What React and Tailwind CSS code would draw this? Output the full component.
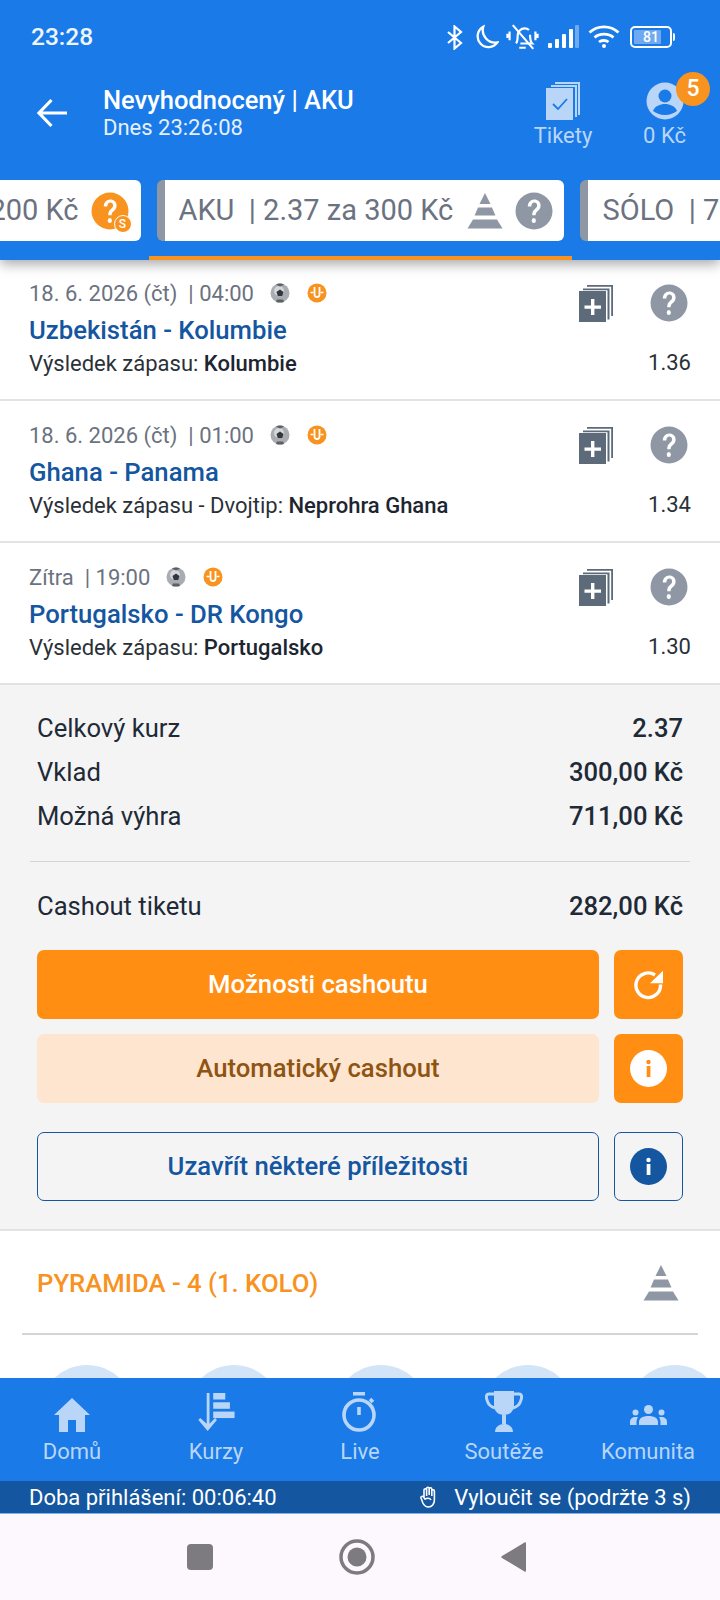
import React from "react";

function Question({ size = 38, color = "#8e97a3" }) {
  return (
    <svg width={size} height={size} viewBox="0 0 38 38">
      <circle cx="19" cy="19" r="18.500" fill={color} />
      <path d="M12.800 14.500c0-4 2.800-7 6.500-7s6.300 2.500 6.300 6c0 3-1.500 4.500-3 5.800-1.300 1.200-2 2-2 4h-3.400c0-3.200.9-4.600 2.500-6 1.300-1.200 2.400-2 2.400-3.700 0-1.700-1-3-2.800-3-1.600 0-2.900 1.400-3 3.900z" fill="#fff" />
      <ellipse cx="18.800" cy="28.500" rx="2.100" ry="2.500" fill="#fff" />
    </svg>
  );
}

function Pyramid({ width = 36, height = 36 }) {
  return (
    <svg width={width} height={height} viewBox="0 0 36 36" fill="#8e97a3">
      <path d="M18 0l5.500 11h-11z" />
      <path d="M11 14.500h14l3.400 8H7.600z" />
      <path d="M6 26.500h24l5.500 9H.5z" />
    </svg>
  );
}

function CopyPlus() {
  return (
    <svg width="34" height="37" viewBox="0 0 34 37">
      <path d="M8 0h26v31h-1.800V1.800H8z" fill="#5d6a7a" />
      <path d="M4 3.500h26.500v31h-2V5.200H4z" fill="#5d6a7a" />
      <rect x="0" y="6" width="27" height="31" fill="#5d6a7a" />
      <path d="M12 14h3.400v6.400H22v3.400h-6.600V30H12v-6.200H5.500v-3.400H12z" fill="#fff" />
    </svg>
  );
}

function Ball() {
  return (
    <svg width="20" height="20" viewBox="0 0 20 20">
      <circle cx="10" cy="10" r="9.500" fill="#a9adb2" />
      <circle cx="9" cy="8" r="5" fill="#d5d7da" />
      <path d="M10 6.500l3.500 2.600-1.300 4h-4.400l-1.300-4z" fill="#33373c" />
      <path d="M10 .5c1.800 0 3 .5 4 1.300L10 3.500 6 1.800C7 1 8.200.5 10 .5zM6 19l1-2.500h6l1 2.500c-2 .8-6 .8-8 0z" fill="#5c6066" />
    </svg>
  );
}

function LiveBadge() {
  return (
    <svg width="20" height="20" viewBox="0 0 20 20">
      <circle cx="10" cy="10" r="9.500" fill="#f7931e" />
      <path d="M7.500 4v7.500a2.500 2.500 0 0 0 5 0V4" fill="none" stroke="#fff" strokeWidth="1.800" />
      <path d="M3.500 9.500h3M13.500 9.500h3" stroke="#fff" strokeWidth="1.600" />
    </svg>
  );
}

function Match({ date, name, tip, pick, odds }) {
  return (
    <div className="h-[142px] border-b-2 border-[#e2e3e5] bg-white pl-[29px] pr-[29px] pt-[21px] flex justify-between shrink-0">
      <div className="flex-1">
        <div className="flex items-center h-[26px] text-[22px] text-[#6b7280]">
          <span>{date}</span>
          <span className="ml-[16px]"><Ball /></span>
          <span className="ml-[17px]"><LiveBadge /></span>
        </div>
        <div className="mt-[7px] text-[25.700px] leading-[34px] font-medium text-[#14569f]">{name}</div>
        <div className="mt-[2px] text-[22px] leading-[30px] text-[#2b3138]">
          {tip} <span className="font-medium text-[#1c2530]">{pick}</span>
        </div>
      </div>
      <div className="flex flex-col items-end">
        <div className="flex items-center gap-[37px] mt-[4px] mr-[3px]">
          <CopyPlus />
          <Question />
        </div>
        <div className="mt-[26px] text-[22px] leading-[30px] text-[#2b3138]">{odds}</div>
      </div>
    </div>
  );
}

function SummaryRow({ label, value, className = "" }) {
  return (
    <div className={`flex justify-between items-center text-[25.600px] leading-[38px] text-[#1f2a37] ${className}`}>
      <span>{label}</span>
      <span className="font-medium">{value}</span>
    </div>
  );
}

function NavItem({ label, children }) {
  return (
    <div className="flex-1 flex flex-col items-center">
      <div className="h-[44px] flex items-end justify-center">{children}</div>
      <div className="mt-[5px] text-[22px] leading-[30px] text-[#b9d6f8]">{label}</div>
    </div>
  );
}

export default function App() {
  return (
    <div className="w-[720px] h-[1600px] flex flex-col overflow-hidden bg-white font-['Roboto',sans-serif]">
      {/* Top blue header */}
      <div className="h-[260px] shrink-0 bg-[#1a7ae8] relative z-10 shadow-[0_4px_12px_rgba(0,0,0,0.35)] flex flex-col">
        {/* status bar */}
        <div className="h-[74px] shrink-0 flex items-center justify-between pl-[31px] pr-[45px]">
          <span className="text-[24.500px] font-medium text-[#eef5fe]">23:28</span>
          <div className="flex items-center text-white">
            <svg width="18" height="25" viewBox="0 0 18 24" fill="none" stroke="#fff" strokeWidth="2.200">
              <path d="M2 6.500l13 11-6.500 5.500V1l6.500 5.500-13 11" />
            </svg>
            <svg className="ml-[9px]" width="26" height="26" viewBox="0 0 24 24" fill="none" stroke="#fff" strokeWidth="2.100">
              <path d="M9.500 2.500A10 10 0 1 0 22.500 17 11.500 11.500 0 0 1 9.500 2.500z" />
            </svg>
            <svg className="ml-[7px]" width="33" height="28" viewBox="0 0 30 26" fill="none" stroke="#fff" strokeWidth="2">
              <path d="M9 19c1.500-2 1.500-4 1.500-7 0-4 3-7 6.500-7 1.500 0 3 .5 4 1.500M22 11c0 4 0 6 2 8H13" />
              <path d="M12 23h6M6 2l19 22M3 8v8M1 10v4M27 8v8M29 10v4" />
            </svg>
            <svg className="ml-[8px]" width="32" height="24" viewBox="0 0 32 24">
              <rect x="1" y="18" width="4" height="5" rx="1" fill="#fff" />
              <rect x="8" y="14" width="4" height="9" rx="1" fill="#fff" />
              <rect x="15" y="9" width="4" height="14" rx="1" fill="#fff" />
              <rect x="22" y="4" width="4" height="19" rx="1" fill="#fff" />
              <rect x="28" y="0" width="4" height="23" rx="1" fill="#6fa9ef" />
            </svg>
            <svg className="ml-[9px]" width="32" height="26" viewBox="0 0 32 26" fill="none" stroke="#fff" strokeWidth="2.800">
              <path d="M1.500 8.500c8-7.500 21-7.500 29 0M6.500 13.500c5-4.500 14-4.500 19 0M11 18c2.500-2 7-2 9.500 0" />
              <circle cx="16" cy="22" r="2" fill="#fff" stroke="none" />
            </svg>
            <div className="ml-[10px] flex items-center">
              <div className="w-[42px] h-[22px] rounded-[5px] border-2 border-white p-[2px] relative">
                <div className="h-full w-[80%] bg-[#6fa9ef] rounded-[1px]" />
                <span className="absolute inset-0 flex items-center justify-center text-[14px] font-medium text-white">81</span>
              </div>
              <div className="ml-[1px] w-[2px] h-[8px] bg-white rounded-r" />
            </div>
          </div>
        </div>
        {/* title row */}
        <div className="h-[106px] shrink-0 flex items-start pl-[36px] relative">
          <svg className="mt-[24px]" width="32" height="30" viewBox="0 0 32 30" fill="none" stroke="#fff" strokeWidth="3.200">
            <path d="M15.500 2L3 15l12.500 13M3 15h28" />
          </svg>
          <div className="ml-[35px] mt-[11px]">
            <div className="text-[25.500px] leading-[30px] font-medium text-white">Nevyhodnocený | AKU</div>
            <div className="text-[22px] leading-[26px] text-[#e6f0fd]">Dnes 23:26:08</div>
          </div>
          <div className="ml-auto flex">
            <div className="w-[100px] flex flex-col items-center mt-[8px]">
              <svg width="34" height="38" viewBox="0 0 34 38">
                <path d="M9 0h25v33h-2V2H9z" fill="#b9d6f8" />
                <path d="M5 3h26v32h-2V5H5z" fill="#b9d6f8" />
                <rect x="0" y="6" width="27" height="32" fill="#b9d6f8" />
                <path d="M7 22l5 5L21 17" fill="none" stroke="#1a7ae8" strokeWidth="1.800" />
              </svg>
              <span className="mt-[1px] text-[22px] leading-[30px] text-[#b9d6f8]">Tikety</span>
            </div>
            <div className="w-[103px] mr-[4px] flex flex-col items-center mt-[8px] relative">
              <svg width="38" height="38" viewBox="0 0 38 38">
                <circle cx="19" cy="19" r="18.500" fill="#b9d6f8" />
                <circle cx="19" cy="14" r="6.500" fill="#1a7ae8" />
                <path d="M7 29c2-5 7-7 12-7s10 2 12 7c-3 2-7 4-12 4s-9-2-12-4z" fill="#1a7ae8" />
              </svg>
              <span className="mt-[1px] text-[22px] leading-[30px] text-[#b9d6f8]">0 Kč</span>
              <span className="absolute left-[63px] top-[-10px] w-[34px] h-[34px] rounded-full bg-[#f7931e] text-white text-[23px] font-medium flex items-center justify-center">5</span>
            </div>
          </div>
        </div>
        {/* tabs */}
        <div className="flex justify-center gap-[16px] h-[61px] shrink-0 overflow-hidden">
          <div className="w-[300px] shrink-0 bg-white rounded-[6px] flex items-center justify-end pr-[12px]">
            <span className="text-[29px] text-[#6b7280] whitespace-nowrap">SÓLO | 2.00 za 200 Kč</span>
            <span className="ml-[12px] relative">
              <Question color="#f7931e" />
              <span className="absolute right-[-3px] bottom-[-3px] w-[18px] h-[18px] rounded-full bg-[#f7931e] border border-white text-white text-[12px] font-medium flex items-center justify-center">S</span>
            </span>
          </div>
          <div className="w-[407px] shrink-0 bg-white rounded-[6px] border-l-[8px] border-[#8e97a3] flex items-center pl-[14px] pr-[11px]">
            <span className="text-[29px] text-[#6b7280] whitespace-nowrap">AKU&nbsp; | 2.37 za 300 Kč</span>
            <span className="ml-auto"><Pyramid /></span>
            <span className="ml-[12px]"><Question /></span>
          </div>
          <div className="w-[300px] shrink-0 bg-white rounded-[6px] border-l-[8px] border-[#8e97a3] flex items-center pl-[15px]">
            <span className="text-[29px] text-[#6b7280] whitespace-nowrap">SÓLO&nbsp; | 7.50 za 100 Kč</span>
          </div>
        </div>
        <div className="mt-auto mx-auto w-[423px] h-[4px] bg-[#f7931e]" />
      </div>

      {/* Scroll content */}
      <div className="flex-1 min-h-0 overflow-hidden flex flex-col -mt-[1px]">
        <Match date="18. 6. 2026 (čt)&nbsp; | 04:00" name="Uzbekistán - Kolumbie" tip="Výsledek zápasu:" pick="Kolumbie" odds="1.36" />
        <Match date="18. 6. 2026 (čt)&nbsp; | 01:00" name="Ghana - Panama" tip="Výsledek zápasu - Dvojtip:" pick="Neprohra Ghana" odds="1.34" />
        <Match date="Zítra&nbsp; | 19:00" name="Portugalsko - DR Kongo" tip="Výsledek zápasu:" pick="Portugalsko" odds="1.30" />

        {/* summary */}
        <div className="h-[546px] shrink-0 bg-[#f4f4f5] border-b-2 border-[#e2e3e5] px-[30px] pt-[24px]">
          <div className="px-[7px] flex flex-col gap-[6px]">
            <SummaryRow label="Celkový kurz" value="2.37" />
            <SummaryRow label="Vklad" value="300,00 Kč" />
            <SummaryRow label="Možná výhra" value="711,00 Kč" />
          </div>
          <div className="h-[1px] bg-[#d4d5d8] mt-[26px]" />
          <SummaryRow label="Cashout tiketu" value="282,00 Kč" className="px-[7px] mt-[25px]" />
          <div className="px-[7px] mt-[25px] flex flex-col">
            <div className="flex gap-[15px]">
              <div className="flex-1 h-[69px] rounded-[7px] bg-[#ff8e13] flex items-center justify-center text-[25.700px] font-medium text-white">Možnosti cashoutu</div>
              <div className="w-[69px] h-[69px] rounded-[7px] bg-[#ff8e13] flex items-center justify-center">
                <svg width="30" height="30" viewBox="0 0 30 30" fill="none">
                  <path d="M26.500 14.500A12.300 12.300 0 1 1 21 5" stroke="#fff" strokeWidth="3.400" />
                  <path d="M29 .7v12.600H16z" fill="#fff" />
                </svg>
              </div>
            </div>
            <div className="flex gap-[15px] mt-[15px]">
              <div className="flex-1 h-[69px] rounded-[7px] bg-[#fde5d0] flex items-center justify-center text-[25.700px] font-medium text-[#8f5312]">Automatický cashout</div>
              <div className="w-[69px] h-[69px] rounded-[7px] bg-[#ff8e13] flex items-center justify-center">
                <svg width="37" height="37" viewBox="0 0 37 37">
                  <circle cx="18.500" cy="18.500" r="18.500" fill="#fff" />
                  <circle cx="18.500" cy="12" r="2.200" fill="#ff8e13" />
                  <rect x="16.700" y="16" width="3.700" height="11" fill="#ff8e13" />
                </svg>
              </div>
            </div>
            <div className="flex gap-[15px] mt-[29px]">
              <div className="flex-1 h-[69px] rounded-[7px] border-[1.5px] border-[#14569f] flex items-center justify-center text-[25.700px] font-medium text-[#14569f]">Uzavřít některé příležitosti</div>
              <div className="w-[69px] h-[69px] rounded-[7px] border-[1.5px] border-[#14569f] flex items-center justify-center">
                <svg width="37" height="37" viewBox="0 0 37 37">
                  <circle cx="18.500" cy="18.500" r="18.500" fill="#14569f" />
                  <circle cx="18.500" cy="12" r="2.200" fill="#fff" />
                  <rect x="16.700" y="16" width="3.700" height="11" fill="#fff" />
                </svg>
              </div>
            </div>
          </div>
        </div>

        {/* pyramid */}
        <div className="flex-1 min-h-0 bg-white overflow-hidden">
          <div className="mx-[22px] h-[104px] border-b-2 border-[#d4d5d8] flex items-center justify-between pl-[15px] pr-[19px] pt-[2px]">
            <span className="text-[25.700px] font-medium text-[#f7931e]">PYRAMIDA - 4 (1. KOLO)</span>
            <Pyramid />
          </div>
          <div className="flex gap-[53px] pl-[40px] mt-[30px]">
            {[0, 1, 2, 3, 4].map(i => (
              <div key={i} className="w-[94px] h-[94px] shrink-0 rounded-full bg-[#d2e4f8]" />
            ))}
          </div>
        </div>
      </div>

      {/* Bottom nav */}
      <div className="h-[103px] shrink-0 bg-[#1a7ae8] flex pt-[10px]">
        <NavItem label="Domů">
          <svg width="36" height="34" viewBox="0 0 36 34" fill="#b9d6f8">
            <path d="M18 0L0 17h5v17h9V22h8v12h9V17h5z" />
          </svg>
        </NavItem>
        <NavItem label="Kurzy">
          <svg width="38" height="39" viewBox="0 0 38 42" fill="#b9d6f8">
            <path d="M9 0h3v33l6-6 2 2-10 12L0 29l2-2 7 6z" />
            <rect x="16" y="0" width="13" height="7" />
            <rect x="16" y="10" width="18" height="7" />
            <rect x="16" y="20" width="23" height="7" />
          </svg>
        </NavItem>
        <NavItem label="Live">
          <svg width="36" height="40" viewBox="0 0 36 40" fill="none" stroke="#b9d6f8" strokeWidth="3.600">
            <circle cx="17" cy="23" r="15" />
            <path d="M17 15v8M11 1.800h12M28 7l3 3" />
          </svg>
        </NavItem>
        <NavItem label="Soutěže">
          <svg width="38" height="42" viewBox="0 0 38 42">
            <path d="M9 1h20v14c0 6-4 10-10 10S9 21 9 15z" fill="#b9d6f8" />
            <path d="M9 4H4c-3 0-3 3-2 6 1 4 4 7 8 8M29 4h5c3 0 3 3 2 6-1 4-4 7-8 8" fill="none" stroke="#b9d6f8" strokeWidth="3" />
            <path d="M17 25h4v9h-4z" fill="#b9d6f8" />
            <path d="M10 42c0-5 4-8 9-8s9 3 9 8z" fill="#b9d6f8" />
          </svg>
        </NavItem>
        <NavItem label="Komunita">
          <svg width="37" height="20" viewBox="0 0 37 20" fill="#b9d6f8" className="mb-[7px]">
            <circle cx="18.500" cy="4.500" r="4.500" />
            <circle cx="5.500" cy="7.500" r="3" />
            <circle cx="31.500" cy="7.500" r="3" />
            <path d="M9 20v-3c0-4 4-6 9.500-6s9.500 2 9.500 6v3z" />
            <path d="M0 20v-3c0-3 2-5 6-5 .8 0 1.500 0 2 .3-1 1.200-1.500 3-1.500 4.700v3zM37 20v-3c0-3-2-5-6-5-.8 0-1.500 0-2 .3 1 1.200 1.500 3 1.500 4.700v3z" />
          </svg>
        </NavItem>
      </div>

      {/* Session strip */}
      <div className="h-[33px] shrink-0 bg-[#14569f] flex items-center justify-between px-[29px] text-[22px] text-white border-b border-[#7fb2ee]">
        <span>Doba přihlášení: 00:06:40</span>
        <span className="flex items-center">
          <svg width="18" height="22" viewBox="0 0 18 22" fill="none" stroke="#fff" strokeWidth="1.600" className="mr-[16px]">
            <path d="M4 11V4a1.300 1.300 0 0 1 2.600 0v6M6.600 9V2.500a1.300 1.300 0 0 1 2.600 0V9M9.200 9V3a1.300 1.300 0 0 1 2.600 0v7M11.800 10V5a1.300 1.300 0 0 1 2.600 0v9c0 4-2.500 7-6 7-3 0-4.500-2-5.500-4L1 12c-.5-1.500 1.500-2.500 2.500-1L5 13c2-1 5-1 6 1" />
          </svg>
          Vyloučit se (podržte 3 s)
        </span>
      </div>

      {/* Android nav */}
      <div className="h-[86px] shrink-0 bg-[#fdf7fe] flex items-center">
        <div className="ml-[187px] w-[26px] h-[26px] rounded-[4px] bg-[#7d7a80]" />
        <svg className="ml-[126px]" width="36" height="36" viewBox="0 0 36 36">
          <circle cx="18" cy="18" r="16" fill="none" stroke="#7d7a80" strokeWidth="3.500" />
          <circle cx="18" cy="18" r="9.500" fill="#7d7a80" />
        </svg>
        <svg className="ml-[126px]" width="26" height="30" viewBox="0 0 26 30">
          <path d="M25 1v28c0 .8-.8 1-1.500.5L1 16c-1-.6-1-1.400 0-2L23.500.5C24.200 0 25 .2 25 1z" fill="#7d7a80" />
        </svg>
      </div>
    </div>
  );
}
